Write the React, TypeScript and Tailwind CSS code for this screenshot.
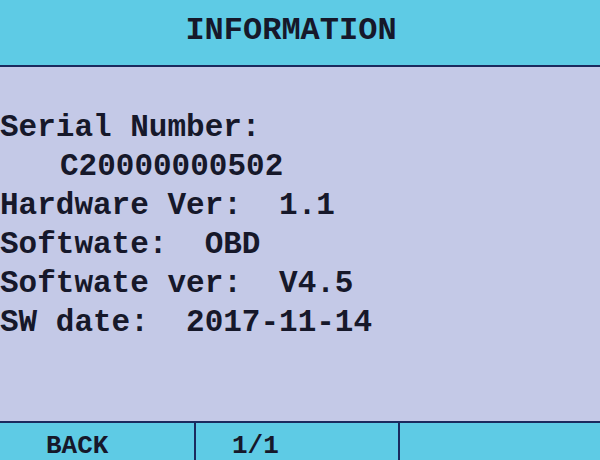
const rows = [
  { text: "Serial Number:", pad: false },
  { text: "C20000000502", pad: true },
  { text: "Hardware Ver:  1.1", pad: false },
  { text: "Softwate:  OBD", pad: false },
  { text: "Softwate ver:  V4.5", pad: false },
  { text: "SW date:  2017-11-14", pad: false },
];

export default function App() {
  return (
    <div className="w-[600px] h-[460px] overflow-hidden flex flex-col bg-[#c4c9e7] text-[#16182a] font-['Liberation_Mono',monospace] font-bold">
      <header className="h-[67px] shrink-0 bg-[#5ecbe5] border-b-2 border-[#1b2a5e] flex justify-center pr-[18px]">
        <span className="text-[32px] leading-[62px]">INFORMATION</span>
      </header>

      <main className="flex-1 pt-[41px] text-[31px] leading-[39px]">
        {rows.map((r, i) => (
          <div key={i} className={r.pad ? "whitespace-pre pl-[60px]" : "whitespace-pre"}>
            {r.text}
          </div>
        ))}
      </main>

      <footer className="h-[39px] shrink-0 bg-[#5ecbe5] border-t-2 border-[#1b2a5e] flex text-[26px] leading-[27px]">
        <div className="w-[194px] pt-[10px] pl-[46px]">BACK</div>
        <div className="w-[206px] pt-[10px] pl-[36px] border-x-2 border-[#1b2a5e]">1/1</div>
        <div className="flex-1" />
      </footer>
    </div>
  );
}
